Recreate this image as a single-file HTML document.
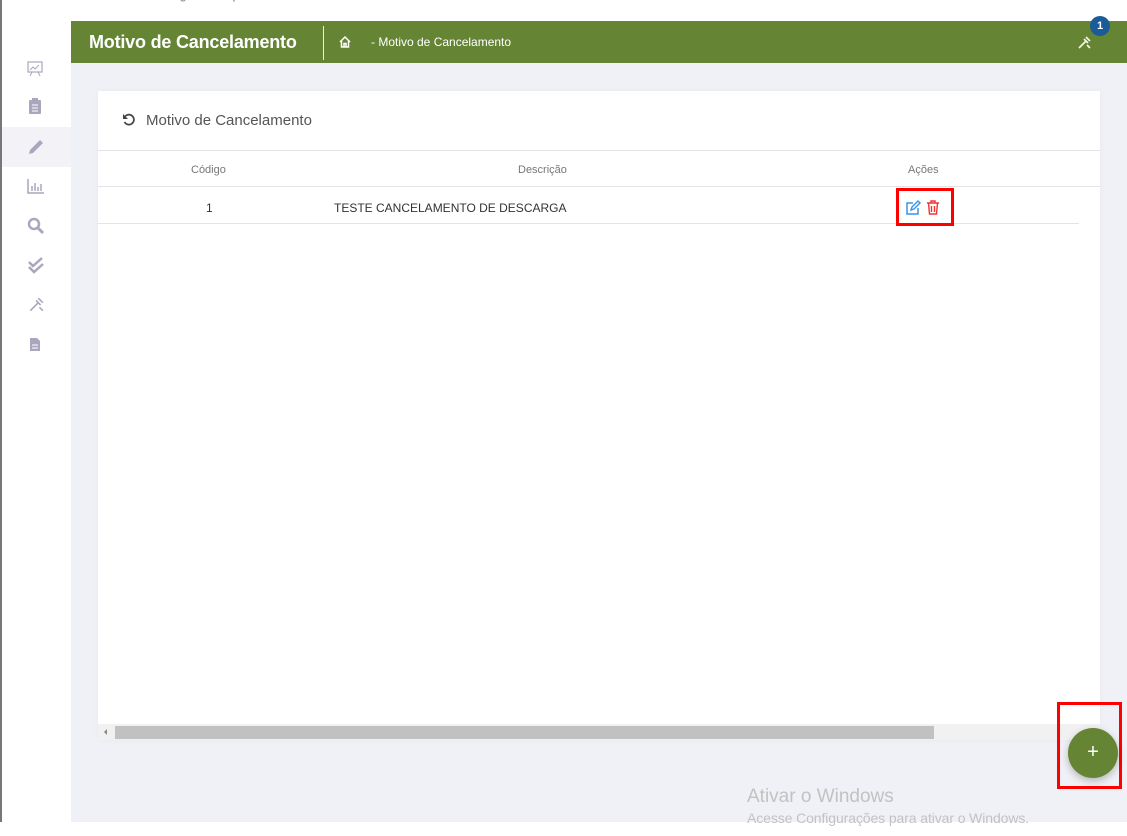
<!DOCTYPE html>
<html><head><meta charset="utf-8"><style>
*{margin:0;padding:0;box-sizing:border-box}
body{width:1127px;height:836px;background:#fff;font-family:"Liberation Sans",sans-serif;position:relative;overflow:hidden}
.abs{position:absolute}
</style></head><body>
<div class="abs" style="left:0;top:0;width:2px;height:822px;background:#777"></div>
<div class="abs" style="left:85px;top:-10px;font-size:11px;color:#999">Usuário: <b>maximalogisticaroop</b></div>
<div class="abs" style="left:445px;top:-10px;font-size:11px;color:#999">Versão: <b>3.7.0</b></div>
<div class="abs" style="left:71px;top:63px;width:1056px;height:759px;background:#f0f1f6"></div>
<div class="abs" style="left:2px;top:127px;width:69px;height:40px;background:#f3f3f7"></div>
<div class="abs" style="left:71px;top:21px;width:1056px;height:42px;background:#658535"></div>
<div class="abs" style="left:89px;top:32px;font-size:18px;color:#fff;font-weight:bold;letter-spacing:-0.2px">Motivo de Cancelamento</div>
<div class="abs" style="left:323px;top:26px;width:1px;height:34px;background:#e8efe0"></div>
<svg class="abs" style="left:338px;top:35px" width="14" height="14" viewBox="0 0 14 14"><path d="M2 7L7 2L12 7M3.5 6V12H10.5V6M6 12V8.5H8V12" fill="none" stroke="#fff" stroke-width="1.5"/></svg>
<div class="abs" style="left:371px;top:35px;font-size:12px;color:#fff">- Motivo de Cancelamento</div>
<svg class="abs" style="left:1077px;top:36px" width="14" height="14" viewBox="0 0 14 14"><path d="M2 12L9 5M7 3l4 4M9 1l4 4M10 9l3 3" stroke="#f4f8e8" stroke-width="1.6" fill="none"/></svg>
<div class="abs" style="left:1090px;top:16px;width:20px;height:20px;border-radius:50%;background:#1a5b98;color:#fff;font-size:11px;font-weight:bold;text-align:center;line-height:20px">1</div>
<svg class="abs" style="left:26px;top:59px" width="18" height="18" viewBox="0 0 18 18"><rect x="2" y="3" width="14" height="10" fill="none" stroke="#a9a7bd" stroke-width="1.2"/><path d="M4 11l3-3 2 2 4-4M6 13l-2 4M12 13l2 4" stroke="#a9a7bd" fill="none"/></svg>
<svg class="abs" style="left:28px;top:97px" width="14" height="18" viewBox="0 0 14 18"><rect x="1" y="3" width="12" height="14" rx="1" fill="#a9a7bd"/><rect x="4" y="1" width="6" height="3" fill="#a9a7bd"/><path d="M4 8h6M4 11h6M4 14h6" stroke="#fff"/></svg>
<svg class="abs" style="left:27px;top:138px" width="18" height="18" viewBox="0 0 18 18"><path d="M2 16l1-4L13 2l3 3L6 15z" fill="#a9a7bd"/></svg>
<svg class="abs" style="left:27px;top:178px" width="18" height="16" viewBox="0 0 18 16"><path d="M1 1v14h16M5 13V8M8 13V5M11 13V9M14 13V6" stroke="#a9a7bd" stroke-width="1.5" fill="none"/></svg>
<svg class="abs" style="left:27px;top:217px" width="18" height="18" viewBox="0 0 18 18"><circle cx="7" cy="7" r="5" stroke="#a9a7bd" stroke-width="2.5" fill="none"/><path d="M11 11l5 5" stroke="#a9a7bd" stroke-width="3"/></svg>
<svg class="abs" style="left:27px;top:257px" width="18" height="18" viewBox="0 0 18 18"><path d="M2 5l4 4 9-8M2 10l5 5 9-8" stroke="#a9a7bd" stroke-width="2.5" fill="none"/></svg>
<svg class="abs" style="left:28px;top:297px" width="16" height="16" viewBox="0 0 14 14"><path d="M2 12L9 5M7 3l4 4M9 1l4 4M10 9l3 3" stroke="#a9a7bd" stroke-width="1.4" fill="none"/></svg>
<svg class="abs" style="left:29px;top:337px" width="12" height="15" viewBox="0 0 12 15"><path d="M1 1h7l3 3v10H1z" fill="#a9a7bd"/><path d="M3 8h6M3 11h6" stroke="#fff"/></svg>
<div class="abs" style="left:98px;top:91px;width:1002px;height:649px;background:#fff;box-shadow:0 0 6px rgba(0,0,0,.04)"></div>
<svg class="abs" style="left:122px;top:113px" width="14" height="14" viewBox="0 0 14 14"><path d="M3 3.5A5 5 0 1 1 2.5 9" fill="none" stroke="#444" stroke-width="1.7"/><path d="M1 1v5h5" fill="#444"/></svg>
<div class="abs" style="left:146px;top:112px;font-size:15px;color:#555">Motivo de Cancelamento</div>
<div class="abs" style="left:98px;top:150px;width:1002px;height:1px;background:#e4e4e8"></div>
<div class="abs" style="left:191px;top:164px;font-size:11px;color:#777">Código</div>
<div class="abs" style="left:518px;top:164px;font-size:11px;color:#777">Descrição</div>
<div class="abs" style="left:908px;top:164px;font-size:11px;color:#777">Ações</div>
<div class="abs" style="left:98px;top:186px;width:1002px;height:1px;background:#e4e4e8"></div>
<div class="abs" style="left:206px;top:201px;font-size:12px;color:#333">1</div>
<div class="abs" style="left:334px;top:201px;font-size:12px;color:#333">TESTE CANCELAMENTO DE DESCARGA</div>
<div class="abs" style="left:98px;top:223px;width:981px;height:1px;background:#e4e4e8"></div>
<div class="abs" style="left:896px;top:188px;width:58px;height:38px;border:3px solid #f00"></div>
<svg class="abs" style="left:905px;top:200px" width="16" height="16" viewBox="0 0 16 16"><path d="M8 3H2v11h11V8" fill="none" stroke="#3a92e8" stroke-width="1.5"/><path d="M6 10l1-3 6-6 2 2-6 6z" fill="none" stroke="#3a92e8" stroke-width="1.4"/></svg>
<svg class="abs" style="left:926px;top:200px" width="14" height="15" viewBox="0 0 14 15"><path d="M1 3h12M5 3V1h4v2M2.5 3l1 11h7l1-11M5.5 6v6M8.5 6v6" fill="none" stroke="#ef3535" stroke-width="1.4"/></svg>
<div class="abs" style="left:98px;top:724px;width:1002px;height:16px;background:#f1f1f1"></div>
<div class="abs" style="left:104px;top:729px;width:0;height:0;border:3px solid transparent;border-right:3px solid #888;border-left:0"></div>
<div class="abs" style="left:115px;top:726px;width:819px;height:13px;background:#c1c1c1"></div>
<div class="abs" style="left:1057px;top:702px;width:65px;height:87px;border:3px solid #f00"></div>
<div class="abs" style="left:1068px;top:728px;width:50px;height:50px;border-radius:50%;background:#658535;color:#fff;font-size:20px;text-align:center;line-height:48px;box-shadow:0 3px 8px rgba(0,0,0,.25)">+</div>
<div class="abs" style="left:747px;top:786px;font-size:19px;color:#c2c2c2">Ativar o Windows</div>
<div class="abs" style="left:747px;top:810px;font-size:14px;color:#c2c2c2;letter-spacing:-0.1px">Acesse Configurações para ativar o Windows.</div>
</body></html>
